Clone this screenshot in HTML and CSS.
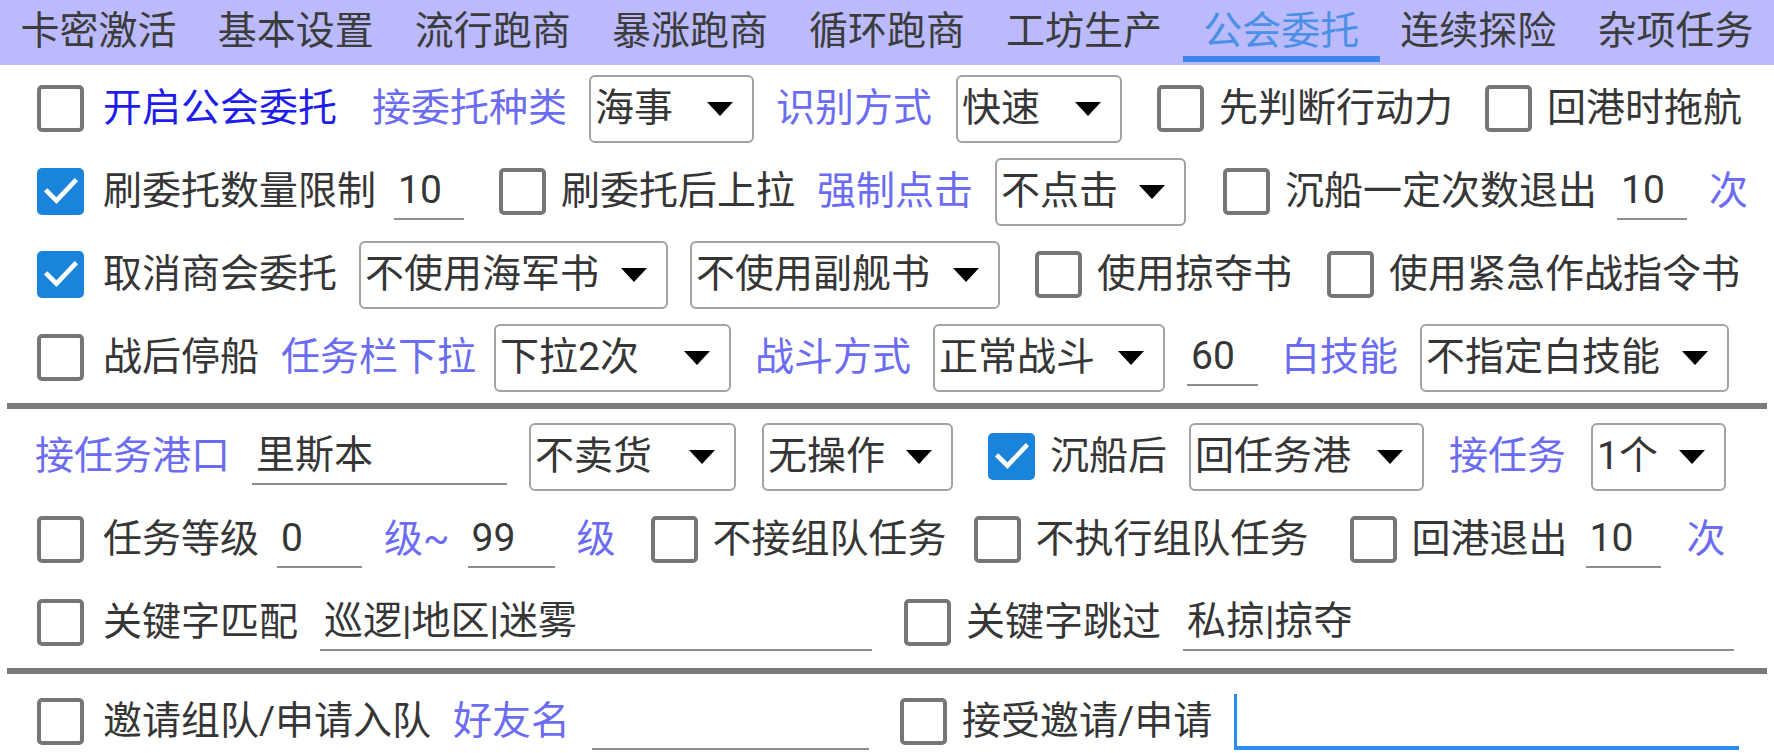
FILE: index.html
```html
<!DOCTYPE html>
<html lang="zh-CN">
<head>
<meta charset="utf-8">
<title>公会委托</title>
<link rel="stylesheet" href="styles.css">
</head>
<body>
<nav class="tabs">
  <div class="tab">卡密激活</div>
  <div class="tab">基本设置</div>
  <div class="tab">流行跑商</div>
  <div class="tab">暴涨跑商</div>
  <div class="tab">循环跑商</div>
  <div class="tab">工坊生产</div>
  <div class="tab active">公会委托</div>
  <div class="tab">连续探险</div>
  <div class="tab">杂项任务</div>
</nav>

<main class="content">
  <div class="row">
    <span class="cb"></span><span class="lbl navy">开启公会委托</span>
    <span class="lbl blue wide-l">接委托种类</span>
    <div class="sel w165"><span>海事</span><svg class="arrow" viewBox="0 0 26 14"><polygon points="0,0 26,0 13,14"/></svg></div>
    <span class="lbl blue">识别方式</span>
    <div class="sel w166 m24"><span>快速</span><svg class="arrow" viewBox="0 0 26 14"><polygon points="0,0 26,0 13,14"/></svg></div>
    <span class="cb"></span><span class="lbl">先判断行动力</span>
    <span class="cb m32"></span><span class="lbl">回港时拖航</span>
  </div>

  <div class="row">
    <span class="cb on"><svg viewBox="0 0 46 46"><path d="M10 23 L19 32 L37 13"/></svg></span><span class="lbl">刷委托数量限制</span>
    <div class="edit e70 m18">10</div>
    <span class="cb"></span><span class="lbl">刷委托后上拉</span>
    <span class="lbl blue">强制点击</span>
    <div class="sel w191"><span>不点击</span><svg class="arrow" viewBox="0 0 26 14"><polygon points="0,0 26,0 13,14"/></svg></div>
    <span class="cb m37"></span><span class="lbl">沉船一定次数退出</span>
    <div class="edit e70 m20">10</div>
    <span class="lbl blue">次</span>
  </div>

  <div class="row">
    <span class="cb on"><svg viewBox="0 0 46 46"><path d="M10 23 L19 32 L37 13"/></svg></span><span class="lbl">取消商会委托</span>
    <div class="sel w309"><span>不使用海军书</span><svg class="arrow" viewBox="0 0 26 14"><polygon points="0,0 26,0 13,14"/></svg></div>
    <div class="sel w310"><span>不使用副舰书</span><svg class="arrow" viewBox="0 0 26 14"><polygon points="0,0 26,0 13,14"/></svg></div>
    <span class="cb"></span><span class="lbl">使用掠夺书</span>
    <span class="cb"></span><span class="lbl">使用紧急作战指令书</span>
  </div>

  <div class="row">
    <span class="cb"></span><span class="lbl">战后停船</span>
    <span class="lbl blue">任务栏下拉</span>
    <div class="sel w237 m18"><span>下拉2次</span><svg class="arrow" viewBox="0 0 26 14"><polygon points="0,0 26,0 13,14"/></svg></div>
    <span class="lbl blue m24">战斗方式</span>
    <div class="sel w232"><span>正常战斗</span><svg class="arrow" viewBox="0 0 26 14"><polygon points="0,0 26,0 13,14"/></svg></div>
    <div class="edit e71">60</div>
    <span class="lbl blue m23">白技能</span>
    <div class="sel w309"><span>不指定白技能</span><svg class="arrow" viewBox="0 0 26 14"><polygon points="0,0 26,0 13,14"/></svg></div>
  </div>

  <div class="divider"></div>

  <div class="row lead-text">
    <span class="lbl blue">接任务港口</span>
    <div class="edit e255">里斯本</div>
    <div class="sel w207"><span>不卖货</span><svg class="arrow" viewBox="0 0 26 14"><polygon points="0,0 26,0 13,14"/></svg></div>
    <div class="sel w191 m26"><span>无操作</span><svg class="arrow" viewBox="0 0 26 14"><polygon points="0,0 26,0 13,14"/></svg></div>
    <span class="cb on"><svg viewBox="0 0 46 46"><path d="M10 23 L19 32 L37 13"/></svg></span><span class="lbl">沉船后</span>
    <div class="sel w235"><span>回任务港</span><svg class="arrow" viewBox="0 0 26 14"><polygon points="0,0 26,0 13,14"/></svg></div>
    <span class="lbl blue m25">接任务</span>
    <div class="sel w135 m25"><span>1个</span><svg class="arrow" viewBox="0 0 26 14"><polygon points="0,0 26,0 13,14"/></svg></div>
  </div>

  <div class="row">
    <span class="cb"></span><span class="lbl">任务等级</span>
    <div class="edit e85 m18">0</div>
    <span class="lbl blue">级~</span>
    <div class="edit e87 m18">99</div>
    <span class="lbl blue">级</span>
    <span class="cb"></span><span class="lbl">不接组队任务</span>
    <span class="cb m27"></span><span class="lbl">不执行组队任务</span>
    <span class="cb m41"></span><span class="lbl">回港退出</span>
    <div class="edit e75 m18">10</div>
    <span class="lbl blue m26">次</span>
  </div>

  <div class="row">
    <span class="cb"></span><span class="lbl">关键字匹配</span>
    <div class="edit e552">巡逻|地区|迷雾</div>
    <span class="cb m32"></span><span class="lbl">关键字跳过</span>
    <div class="edit e551">私掠|掠夺</div>
  </div>

  <div class="divider"></div>

  <div class="row">
    <span class="cb"></span><span class="lbl">邀请组队/申请入队</span>
    <span class="lbl blue">好友名</span>
    <div class="edit e277"></div>
    <span class="cb m31"></span><span class="lbl">接受邀请/申请</span>
    <div class="edit focus"></div>
  </div>
</main>
</body>
</html>
```

FILE: styles.css
```css
html, body {
  margin: 0;
  padding: 0;
  background: #ffffff;
}

body {
  width: 1774px;
  height: 753px;
  overflow: hidden;
  font-family: Roboto, "Noto Sans CJK SC", sans-serif;
  color: #363636;
}

.tabs {
  display: flex;
  height: 65px;
  background: #babafc;
}

.tab {
  flex: 1 1 0;
  display: flex;
  align-items: center;
  justify-content: center;
  font-size: 39px;
  line-height: 1;
  color: #3c3c3c;
  padding-bottom: 3px;
}

.tab.active {
  color: #4a90e6;
  box-shadow: inset 0 -3px 0 #babafc, inset 0 -9px 0 #3d85ef;
}

.content {
  padding-top: 2px;
}

.row {
  display: flex;
  align-items: center;
  height: 83px;
  padding-left: 37px;
  font-size: 39px;
  line-height: 1;
}

.row.lead-text {
  padding-left: 35px;
}

.row > * {
  flex: 0 0 auto;
}

.row > * + * {
  margin-left: 22px;
}

.row > * + .cb {
  margin-left: 35px;
}

.row > .cb + .lbl {
  margin-left: 15px;
}

.row > .cb:first-child + .lbl {
  margin-left: 19px;
}

.row > .wide-l {
  margin-left: 35px;
}

.row > .m18 { margin-left: 18px; }
.row > .m20 { margin-left: 20px; }
.row > .m23 { margin-left: 23px; }
.row > .m24 { margin-left: 24px; }
.row > .m25 { margin-left: 25px; }
.row > .m26 { margin-left: 26px; }
.row > .m27 { margin-left: 27px; }
.row > .m31 { margin-left: 31px; }
.row > .m32 { margin-left: 32px; }
.row > .m37 { margin-left: 37px; }
.row > .m41 { margin-left: 41px; }

.lbl {
  white-space: nowrap;
  color: #363636;
}

.lbl.blue {
  color: #6c6cf2;
}

.lbl.navy {
  color: #1e1ee8;
}

.cb {
  width: 47px;
  height: 47px;
  box-sizing: border-box;
  border: 4.5px solid #767676;
  border-radius: 5px;
  background: #ffffff;
}

.cb.on {
  border: none;
  background: #1a84db;
}

.cb svg {
  display: block;
  width: 47px;
  height: 47px;
}

.cb svg path {
  fill: none;
  stroke: #ffffff;
  stroke-width: 4.5;
  stroke-linecap: square;
  stroke-linejoin: miter;
}

.sel {
  height: 68px;
  box-sizing: border-box;
  border: 2px solid #a2a2a2;
  border-radius: 6px;
  display: flex;
  align-items: center;
  justify-content: space-between;
  padding: 0 19px 0 4px;
  color: #363636;
  white-space: nowrap;
}

.arrow {
  width: 26px;
  height: 14px;
  display: block;
}

.arrow polygon {
  fill: #000000;
}

.w135 { width: 135px; }
.w165 { width: 165px; }
.w166 { width: 166px; }
.w191 { width: 191px; }
.w207 { width: 207px; }
.w232 { width: 232px; }
.w235 { width: 235px; }
.w237 { width: 237px; }
.w309 { width: 309px; }
.w310 { width: 310px; }

.edit {
  height: 56px;
  box-sizing: border-box;
  border-bottom: 2px solid #8e8e8e;
  display: flex;
  align-items: center;
  padding-left: 4px;
  color: #363636;
  white-space: nowrap;
}

.e70 { width: 70px; }
.e71 { width: 71px; }
.e75 { width: 75px; }
.e85 { width: 85px; }
.e87 { width: 87px; }
.e255 { width: 255px; }
.e277 { width: 277px; }
.e551 { width: 551px; }
.e552 { width: 552px; }

.edit.focus {
  width: 505px;
  height: 56px;
  border-left: 3px solid #2b8def;
  border-bottom: 4px solid #2b8def;
}

.divider {
  height: 6px;
  background: #7a7a7a;
  margin: 4px 7px 6px;
}
```
